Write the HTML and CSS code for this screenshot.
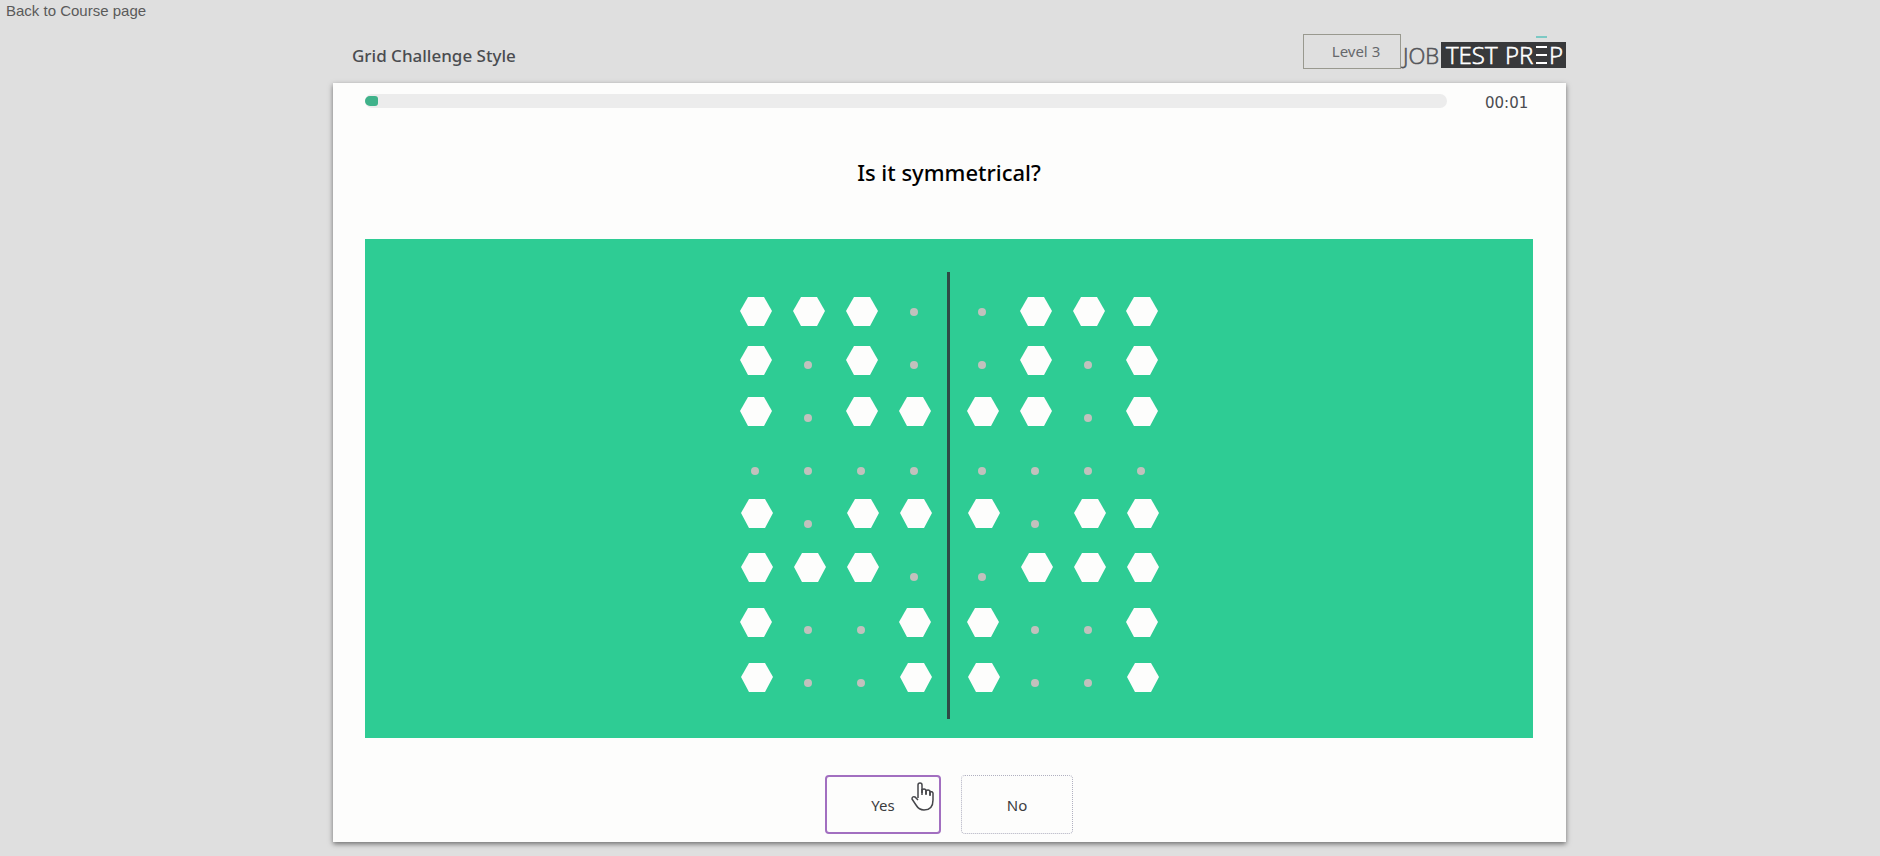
FILE: index.html
```html
<!DOCTYPE html>
<html lang="en">
<head>
    <meta charset="UTF-8">
    <meta name="viewport" content="width=device-width, initial-scale=1.0">
    <title>Grid Challenge Style</title>
    <link rel="stylesheet" href="styles.css">
</head>
<body>
    <nav class="top-nav">
        <a href="#course">Back to Course page</a>
    </nav>
    <div class="container">
        <header class="test-header">
            <h1>Grid Challenge Style</h1>
            <div class="level">Level 3</div>
            <svg class="logo" width="165" height="36" viewBox="0 0 165 36" role="img" aria-label="Job Test Prep">
                <rect x="40" y="8" width="125" height="26" fill="#38393b"/>
                <rect x="135" y="2" width="11" height="2" fill="#7cc9c4"/>
                <text class="logo-job" x="2" y="30">JOB</text>
                <text class="logo-prep" x="45" y="30">TEST</text>
                <text class="logo-prep" x="104" y="30">PR</text>
                <text class="logo-prep" x="148" y="30">P</text>
                <path d="M135 13h11M135 21h11M135 29h11" stroke="#fff" stroke-width="2"/>
            </svg>
        </header>
        <main class="card">
            <div class="status">
                <div class="progress"><div class="progress-bar"></div></div>
                <div class="timer">00:01</div>
            </div>
            <h2>Is it symmetrical?</h2>
            <div class="board">
                <svg width="420" height="450" viewBox="740 271 420 450" role="img" aria-label="Pattern grid">
                    <g id="shapes"></g>
                    <rect x="948" y="271" width="3" height="447" fill="#2f4a45"/>
                </svg>
            </div>
            <div class="answers">
                <button type="button" class="answer selected">Yes
                    <svg class="pointer" width="24" height="30" viewBox="0 0 24 30">
                        <path d="M7 17V4Q7 2 9 2T11 4V12V9Q13 7 15 9V13V10Q17 8 19 10V14V11Q21 10 22 12V19Q22 29 13 29Q8 29 5 24L1 18Q1 15 4 16L7 19"/>
                        <path d="M11 8V14M15 9V14M19 10V15"/>
                    </svg>
                </button>
                <button type="button" class="answer">No</button>
            </div>
        </main>
    </div>
    <script src="script.js"></script>
</body>
</html>
```
FILE: styles.css
```css
body {
    font-family: "Noto Sans", sans-serif;
    margin: 0;
    background-color: #dfdfdf;
    color: #4a4c50;
}
.top-nav {
    height: 34px;
    padding-left: 6px;
    font-family: "Liberation Sans", Arial, sans-serif;
    font-size: 15px;
    line-height: 22px;
}
.top-nav a {
    color: #5a5a5a;
    text-decoration: none;
}
.container {
    margin: 0 314px 0 333px;
    padding-bottom: 12px;
}
.test-header {
    display: flex;
    align-items: flex-start;
    height: 49px;
}
h1 {
    flex: 1;
    margin: 0;
    padding-left: 19px;
    font-size: 17px;
    font-weight: 500;
    line-height: 44px;
}
.level {
    box-sizing: border-box;
    width: 98px;
    height: 35px;
    padding-left: 8px;
    border: 1px solid #99998f;
    color: #66686c;
    font-size: 15px;
    line-height: 32px;
    text-align: center;
}
.logo text {
    font-family: "Open Sans", sans-serif;
    font-weight: 300;
    stroke-width: 0.6;
}
.logo .logo-job {
    fill: #55565a;
    stroke: #55565a;
    font-size: 22px;
}
.logo .logo-prep {
    fill: #fff;
    stroke: #fff;
    font-size: 24px;
}
.card {
    position: relative;
    padding: 0 33px 8px 32px;
    background-color: #fdfdfc;
    box-shadow: 0 2px 5px rgba(0, 0, 0, 0.5);
}
.status {
    display: flex;
    align-items: center;
    height: 36px;
}
.progress {
    flex: 1;
    height: 14px;
    border-radius: 7px;
    background-color: #ececec;
}
.progress-bar {
    width: 13px;
    height: 10px;
    margin-top: 2px;
    border-radius: 5px 3px 3px 5px;
    background-color: #3fb28a;
}
.timer {
    width: 48px;
    margin-left: 38px;
    padding-top: 4px;
    font-family: "DejaVu Sans", Verdana, sans-serif;
    font-size: 15px;
}
h2 {
    margin: 36px 0 50px;
    color: #000;
    font-size: 22px;
    font-weight: 500;
    line-height: 34px;
    text-align: center;
}
.board {
    display: flex;
    justify-content: center;
    padding: 33px 0 16px;
    background-color: #2ecc94;
}
.board svg {
    display: block;
}
.hexagon {
    fill: #fdfdfc;
}
.dot {
    fill: #c1c1bd;
}
.answers {
    display: flex;
    justify-content: center;
    gap: 20px;
    margin-top: 37px;
}
.answer {
    position: relative;
    width: 112px;
    height: 59px;
    border: 1px dotted #b0b0c0;
    border-radius: 4px;
    background-color: transparent;
    color: #3b3c40;
    font-family: inherit;
    font-size: 15px;
}
.answer.selected {
    width: 116px;
    border: 2px solid #a26fc0;
}
.pointer {
    position: absolute;
    top: 4px;
    right: 4px;
    fill: #fff;
    stroke: #45464a;
    stroke-width: 1.5;
}
```
FILE: script.js
```js
// x = hexagon, . = dot
const rows = [
    { cells: 'xxx..xxx', hexX: 757, hexY: 310, dotY: 311 },
    { cells: 'x.x..x.x', hexX: 757, hexY: 359, dotY: 364 },
    { cells: 'x.xxxx.x', hexX: 757, hexY: 410, dotY: 417 },
    { cells: '........', hexX: 757, hexY: 464, dotY: 470 },
    { cells: 'x.xxx.xx', hexX: 758, hexY: 512, dotY: 523 },
    { cells: 'xxx..xxx', hexX: 758, hexY: 566, dotY: 576 },
    { cells: 'x..xx..x', hexX: 757, hexY: 621, dotY: 629 },
    { cells: 'x..xx..x', hexX: 758, hexY: 676, dotY: 682 },
];
const dotX = 756;
const columns = [0, 53, 106, 159, 227, 280, 333, 386];

let shapes = '';
rows.forEach(row => {
    [...row.cells].forEach((cell, i) => {
        if (cell === 'x') {
            shapes += `<path class="hexagon" transform="translate(${row.hexX + columns[i]} ${row.hexY})" d="M-16 0L-8 -14H8L16 0L8 15H-8Z"/>`;
        } else {
            shapes += `<circle class="dot" cx="${dotX + columns[i]}" cy="${row.dotY}" r="4"/>`;
        }
    });
});
document.getElementById('shapes').innerHTML = shapes;
```
